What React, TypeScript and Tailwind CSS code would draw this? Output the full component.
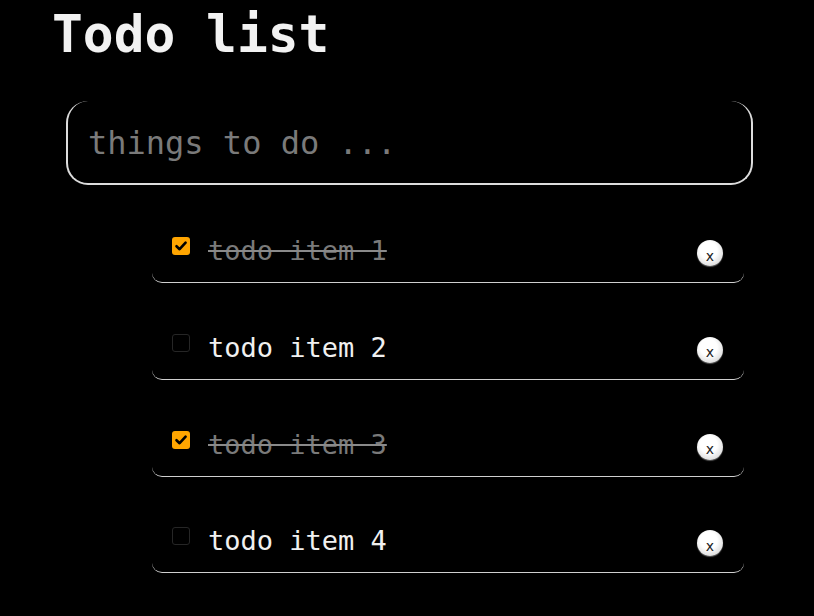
import { useState } from "react";

type Todo = {
  id: number;
  text: string;
  done: boolean;
};

const initialTodos: Todo[] = [
  { id: 1, text: "todo item 1", done: true },
  { id: 2, text: "todo item 2", done: false },
  { id: 3, text: "todo item 3", done: true },
  { id: 4, text: "todo item 4", done: false },
];

function CheckBox({ checked, onToggle }: { checked: boolean; onToggle: () => void }) {
  return (
    <button
      type="button"
      onClick={onToggle}
      className={`mt-[3px] flex h-[18px] w-[18px] shrink-0 items-center justify-center self-start rounded-[3px] ${
        checked ? "bg-[#ffa500]" : "border-[1.5px] border-[#262626] bg-black"
      }`}
    >
      {checked && (
        <svg width="14" height="14" viewBox="0 0 14 14">
          <path
            d="M2.5 7.2 L5.6 10.2 L11.6 3.6"
            fill="none"
            stroke="#000"
            strokeWidth="2.6"
            strokeLinecap="round"
            strokeLinejoin="round"
          />
        </svg>
      )}
    </button>
  );
}

export default function App() {
  const [todos, setTodos] = useState<Todo[]>(initialTodos);
  const [draft, setDraft] = useState("");

  const toggle = (id: number) =>
    setTodos((list) => list.map((t) => (t.id === id ? { ...t, done: !t.done } : t)));

  const remove = (id: number) => setTodos((list) => list.filter((t) => t.id !== id));

  return (
    <div className="min-h-[616px] bg-black pt-[6px] font-['DejaVu_Sans_Mono',monospace]">
      <h1 className="ml-[52px] text-[51.2px] font-bold leading-[1.1] text-[#f2f2f2]">
        Todo list
      </h1>

      <input
        value={draft}
        onChange={(e) => setDraft(e.target.value)}
        placeholder="things to do ..."
        className="ml-[66px] mt-[39px] block h-[84px] w-[687px] rounded-[22px] border-x-2 border-b-2 border-t-0 border-[#dcdcdc] bg-black pl-[20px] pt-[2px] text-[32px] text-white outline-none placeholder:text-[#7a7a7a]"
      />

      <ul className="ml-[152px] mt-[18px] flex w-[592px] flex-col gap-[16.67px]">
        {todos.map((todo) => (
          <li
            key={todo.id}
            className="flex rounded-[10px] border-b border-[#cfcfcf] pb-[14px] pl-[20px] pr-[21px] pt-[31px]"
          >
            <CheckBox checked={todo.done} onToggle={() => toggle(todo.id)} />
            <span
              className={`ml-[18px] flex-1 text-[27px] leading-[34px] ${
                todo.done ? "text-[#7a7a7a] line-through decoration-[#8a8a8a]" : "text-[#f0f0f0]"
              }`}
            >
              {todo.text}
            </span>
            <button
              type="button"
              onClick={() => remove(todo.id)}
              className="mt-[6px] flex h-[26px] w-[26px] items-center justify-center self-start rounded-full bg-[radial-gradient(circle_at_45%_40%,#ffffff_40%,#e2e2e2_70%,#9a9a9a_100%)] pt-[5px] font-['DejaVu_Sans',sans-serif] text-[14px] leading-none text-[#222] shadow-[0_1px_1px_rgba(255,255,255,0.35)]"
            >
              x
            </button>
          </li>
        ))}
      </ul>
    </div>
  );
}
